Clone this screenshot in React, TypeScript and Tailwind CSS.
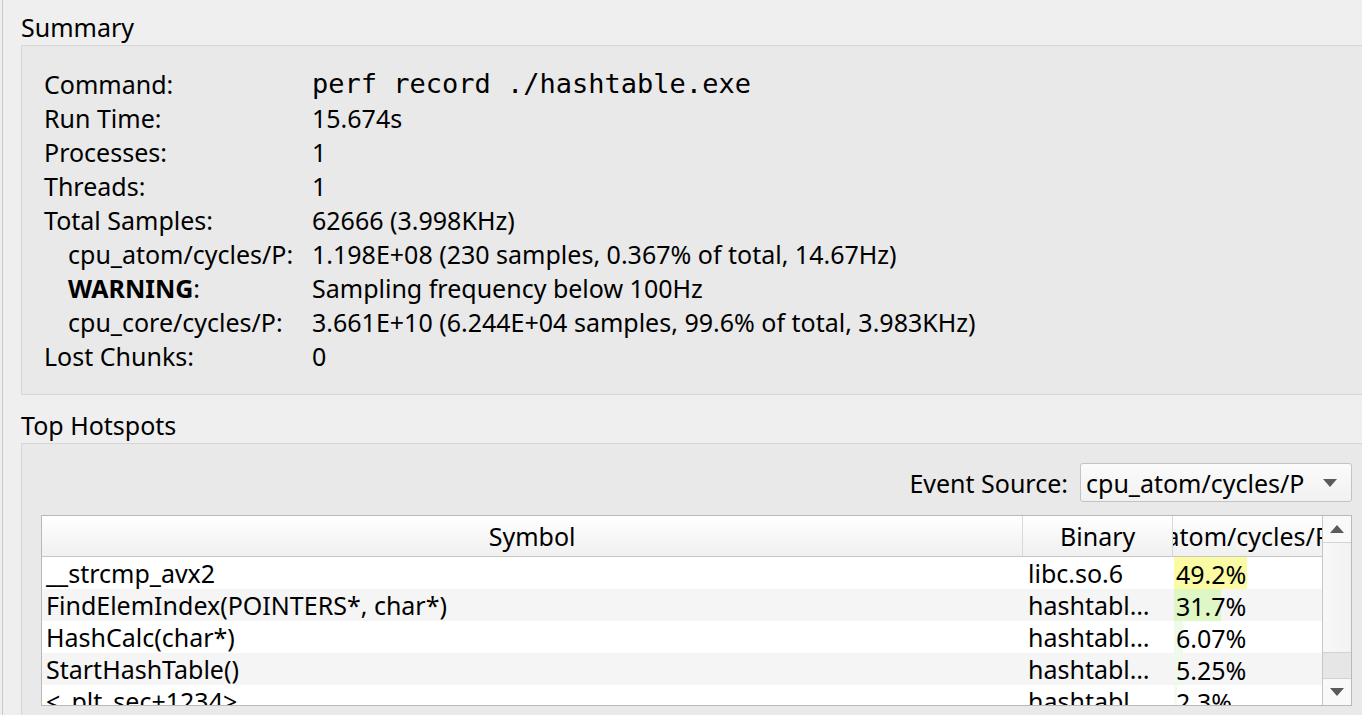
const summary: { label: string; value: string; sub?: boolean; bold?: boolean; mono?: boolean }[] = [
  { label: "Command:", value: "perf record ./hashtable.exe", mono: true },
  { label: "Run Time:", value: "15.674s" },
  { label: "Processes:", value: "1" },
  { label: "Threads:", value: "1" },
  { label: "Total Samples:", value: "62666 (3.998KHz)" },
  { label: "cpu_atom/cycles/P:", value: "1.198E+08 (230 samples, 0.367% of total, 14.67Hz)", sub: true },
  { label: "WARNING", value: "Sampling frequency below 100Hz", sub: true, bold: true },
  { label: "cpu_core/cycles/P:", value: "3.661E+10 (6.244E+04 samples, 99.6% of total, 3.983KHz)", sub: true },
  { label: "Lost Chunks:", value: "0" },
];

const hotspots = [
  { symbol: "__strcmp_avx2", binary: "libc.so.6", cost: "49.2%", pct: 49.2, color: "#fbfba4" },
  { symbol: "FindElemIndex(POINTERS*, char*)", binary: "hashtable.exe", cost: "31.7%", pct: 31.7, color: "#dff6c5" },
  { symbol: "HashCalc(char*)", binary: "hashtable.exe", cost: "6.07%", pct: 6.07, color: "#eefaec" },
  { symbol: "StartHashTable()", binary: "hashtable.exe", cost: "5.25%", pct: 5.25, color: "#eefaec" },
  { symbol: "<_plt_sec+1234>", binary: "hashtable.exe", cost: "2.3%", pct: 2.3, color: "#f1fbf0" },
];

function Arrow({ up }: { up?: boolean }) {
  return (
    <svg width="14" height="8" viewBox="0 0 14 8">
      <path d={up ? "M0 8 L7 0 L14 8 Z" : "M0 0 L7 8 L14 0 Z"} fill="#5a5a5a" />
    </svg>
  );
}

export default function App() {
  return (
    <div className="h-[715px] w-[1362px] overflow-hidden bg-[#efefef] font-['Noto_Sans',sans-serif] text-[25px] leading-[34px] text-black">
      <div className="ml-[2px] h-full border-l border-[#c9c9c9] pl-[18px]">
        <div className="h-[45px] pt-[10px]">Summary</div>
        <div className="mr-[-10px] border border-[#d6d6d6] bg-[#e9e9e9] pb-[21px] pl-[22px] pt-[21px]">
          {summary.map((r) => (
            <div key={r.label} className="flex h-[34px] items-center">
              <div className={`w-[268px] shrink-0 ${r.sub ? "pl-[24px]" : ""}`}>
                {r.bold ? (
                  <>
                    <span className="font-bold">{r.label}</span>:
                  </>
                ) : (
                  r.label
                )}
              </div>
              <div className={r.mono ? "font-['DejaVu_Sans_Mono',monospace] text-[27px]" : ""}>{r.value}</div>
            </div>
          ))}
        </div>

        <div className="h-[48px] pt-[13px]">Top Hotspots</div>
        <div className="mr-[-10px] h-[300px] border border-[#d6d6d6] bg-[#e9e9e9] pl-[19px] pr-[19px] pt-[19px]">
          <div className="flex h-[39px] items-center justify-end gap-[12px]">
            <span>Event Source:</span>
            <div className="flex h-[39px] w-[272px] items-center justify-between rounded-[3px] border border-[#c3c3c3] bg-gradient-to-b from-[#fbfbfb] to-[#f1f1f1] pl-[5px] pr-[14px]">
              <span>cpu_atom/cycles/P</span>
              <Arrow />
            </div>
          </div>

          <div className="mt-[13px] flex h-[191px] border border-[#b9b9b9] bg-white">
            <div className="flex-1 overflow-hidden">
              <div className="flex h-[41px] border-b border-[#c6c6c6] bg-gradient-to-b from-[#ffffff] to-[#f0f0f0]">
                <div className="flex w-[982px] items-center justify-center border-r border-[#d9d9d9]">Symbol</div>
                <div className="flex w-[150px] items-center justify-center border-r border-[#d9d9d9]">Binary</div>
                <div className="flex w-[149px] items-center justify-end overflow-hidden whitespace-nowrap">
                  <span className="mr-[-8px] shrink-0">cpu_atom/cycles/P</span>
                </div>
              </div>
              <div className="h-[148px] overflow-hidden">
                {hotspots.map((h, i) => (
                  <div key={h.symbol} className={`flex h-[32px] items-center ${i % 2 ? "bg-[#f5f5f5]" : "bg-white"}`}>
                    <div className="w-[982px] shrink-0 truncate pl-[4px]">{h.symbol}</div>
                    <div className="w-[150px] shrink-0 truncate pl-[4px] pr-[14px]">{h.binary}</div>
                    <div className="relative h-full w-[149px] shrink-0">
                      <div
                        className="absolute inset-y-0 left-0"
                        style={{ width: `${h.pct}%`, backgroundColor: h.color }}
                      />
                      <span className="relative pl-[2px]">{h.cost}</span>
                    </div>
                  </div>
                ))}
              </div>
            </div>

            <div className="flex w-[29px] flex-col border-l border-[#c6c6c6] bg-[#f7f7f7]">
              <div className="flex h-[27px] items-center justify-center border-b border-[#d4d4d4] bg-[#f9f9f9]">
                <Arrow up />
              </div>
              <div className="flex-1 bg-gradient-to-r from-[#f8f8f8] to-[#f2f2f2]" />
              <div className="h-[27px] border-y border-[#d2d2d2] bg-[#e6e6e6]" />
              <div className="flex h-[26px] items-center justify-center bg-[#f9f9f9]">
                <Arrow />
              </div>
            </div>
          </div>
        </div>
      </div>
    </div>
  );
}
